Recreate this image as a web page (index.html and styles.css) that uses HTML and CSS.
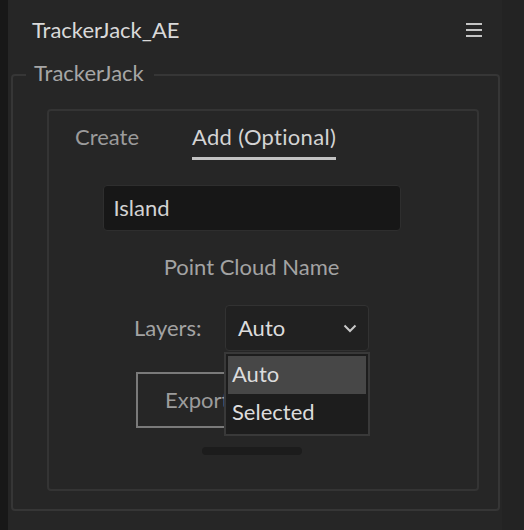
FILE: index.html
```html
<!DOCTYPE html>
<html>
<head>
<meta charset="utf-8">
<link rel="stylesheet" href="styles.css">
</head>
<body>
<div class="app">
  <div class="strip-left"></div>
  <div class="panel">
    <header class="header">
      <div class="title">TrackerJack_AE</div>
      <svg class="menu" width="16" height="14" viewBox="0 0 16 14">
        <rect x="0" y="0" width="16" height="2" fill="#c4c4c4"/>
        <rect x="0" y="6" width="16" height="2" fill="#c4c4c4"/>
        <rect x="0" y="12" width="16" height="2" fill="#c4c4c4"/>
      </svg>
    </header>
    <fieldset class="group">
      <legend class="legend">TrackerJack</legend>
      <div class="group-body">
        <div class="card">
          <div class="column">
            <div class="tabs">
              <div class="tab">Create</div>
              <div class="tab active">Add (Optional)</div>
            </div>
            <div class="input">Island</div>
            <div class="caption">Point Cloud Name</div>
            <div class="layers-row">
              <div class="label">Layers:</div>
              <div class="select-wrap">
                <div class="select">
                  <span>Auto</span>
                  <svg class="chev" width="14" height="9" viewBox="0 0 14 9">
                    <path d="M1.5 1.5 L7 7 L12.5 1.5" fill="none" stroke="#c8c8c8" stroke-width="2"/>
                  </svg>
                </div>
                <div class="dropdown">
                  <div class="opt hl">Auto</div>
                  <div class="opt">Selected</div>
                </div>
              </div>
            </div>
            <div class="btn-row">
              <div class="btn">Export</div>
            </div>
            <div class="pill"></div>
          </div>
        </div>
      </div>
    </fieldset>
  </div>
  <div class="strip-right"></div>
</div>
</body>
</html>
```
FILE: styles.css
```css
* { box-sizing: border-box; }
html, body { margin: 0; padding: 0; }
body {
  background: #262626;
  font-family: "Lato", "Noto Sans", sans-serif;
  font-size: 22px;
  line-height: 24px;
}
.app { display: flex; width: 524px; height: 530px; }
.strip-left { width: 8px; background: #181818; }
.panel { width: 494px; background: #262626; }
.strip-right { flex: 1; background: #232323; }

.header {
  height: 61px;
  display: flex;
  justify-content: space-between;
  align-items: flex-start;
  padding: 18px 20px 0 24px;
}
.title { color: #d9d9d9; }
.menu { margin-top: 5px; }

.group {
  margin: 0 2px 0 3px;
  padding: 0;
  border: 2px solid #363636;
  border-radius: 4px;
  min-width: 0;
}
.legend {
  margin-left: 13px;
  padding: 0 10px 4px 8px;
  color: #a6a6a6;
  line-height: 24px;
}
.group-body { padding: 20px 19px 18px 34px; }

.card {
  height: 382px;
  border: 2px solid #343434;
  border-radius: 4px;
}
.column {
  width: 405px;
  display: flex;
  flex-direction: column;
  align-items: center;
}
.tabs {
  align-self: stretch;
  display: flex;
  gap: 53px;
  padding: 14px 0 0 26px;
}
.tab { color: #9b9b9b; padding-bottom: 8px; border-bottom: 3px solid transparent; }
.tab.active { color: #d4d4d4; border-bottom-color: #c2c2c2; letter-spacing: 0.3px; }

.input {
  margin-top: 25px;
  width: 298px;
  height: 46px;
  background: #171717;
  border: 1px solid #2e2e2e;
  border-radius: 4px;
  color: #d2d2d2;
  padding: 10px 10px;
}
.caption { margin-top: 24px; color: #a3a3a3; }

.layers-row {
  margin-top: 26px;
  width: 235px;
  display: flex;
  align-items: center;
  justify-content: space-between;
}
.label { color: #a3a3a3; }
.select-wrap { position: relative; }
.select {
  width: 144px;
  height: 46px;
  background: #212121;
  border: 1px solid #323232;
  border-radius: 4px;
  display: flex;
  align-items: center;
  justify-content: space-between;
  padding: 0 11px 0 12px;
  color: #dcdcdc;
}
.chev { margin-top: 1px; }
.dropdown {
  position: absolute;
  left: -1px;
  top: 47px;
  width: 146px;
  background: #1d1d1d;
  border: 2px solid #393939;
  padding: 2px;
  z-index: 2;
}
.opt {
  height: 38px;
  padding: 6px 4px 8px;
  color: #dcdcdc;
}
.opt.hl { background: #474747; }

.btn-row { width: 235px; margin-top: 21px; }
.btn {
  margin-left: 2px;
  width: 230px;
  height: 56px;
  border: 2px solid #7a7a7a;
  color: #9c9c9c;
  padding: 14px 27px;
}
.pill {
  margin-top: 19px;
  width: 100px;
  height: 8px;
  border-radius: 4px;
  background: #1c1c1c;
}
```
